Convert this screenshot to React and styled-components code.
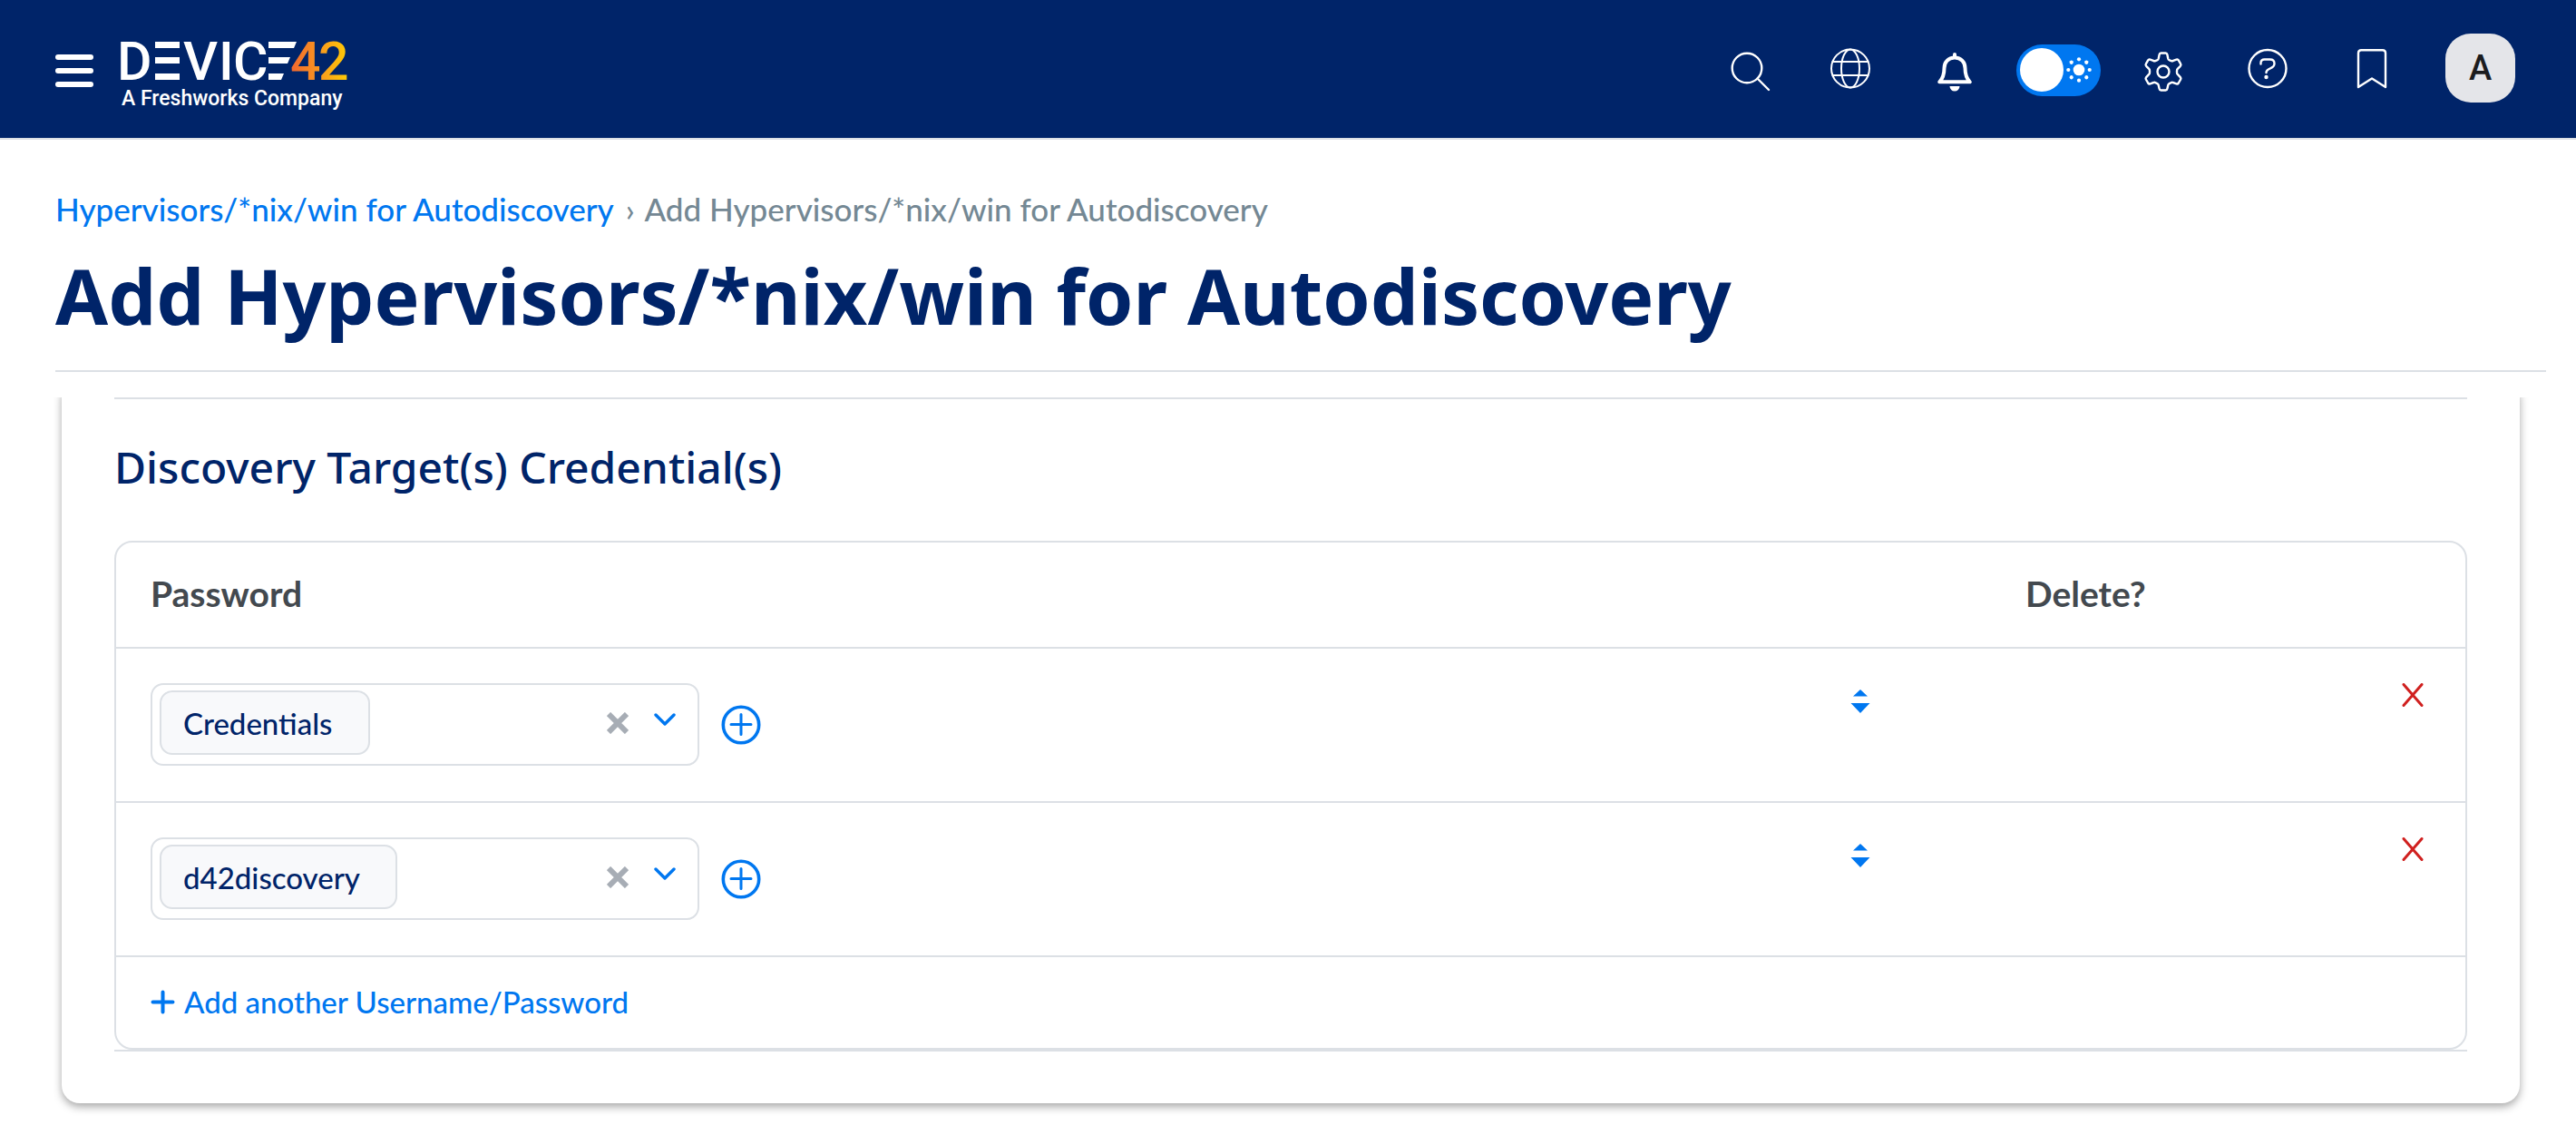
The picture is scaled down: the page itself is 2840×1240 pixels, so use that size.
import React from "react";
import styled, { createGlobalStyle } from "styled-components";

const color = {
  navy: "#002469",
  blue: "#0077f0",
  line: "#dce0e5",
  grey: "#748894",
  heading: "#43494f",
  red: "#d0201f",
};

const GlobalStyle = createGlobalStyle`
  *, *::before, *::after { box-sizing: border-box; }
  body {
    margin: 0;
    background: #fff;
    color: ${color.navy};
    font-family: Lato, "Liberation Sans", sans-serif;
    font-weight: 500;
  }
  button {
    margin: 0;
    padding: 0;
    border: 0;
    background: none;
    color: inherit;
    font: inherit;
    cursor: pointer;
  }
  svg { display: block; flex: none; }
`;

/* ---------- top bar ---------- */

const TopBar = styled.header`
  display: flex;
  align-items: center;
  height: 154px;
  padding: 0 67px 2px 61px;
  background: ${color.navy};
  border-bottom: 2px solid ${color.line};
`;

const MenuButton = styled.button`
  display: grid;
  gap: 9px;
  width: 42px;
  margin-right: 24px;
  padding-top: 6px;
`;

const MenuLine = styled.span`
  height: 6px;
  border-radius: 3px;
  background: #fff;
`;

const LogoLink = styled.a`
  display: block;
  font-family: Roboto, sans-serif;
  font-weight: 500;
`;

const Actions = styled.nav`
  display: flex;
  align-items: center;
  margin-left: auto;
`;

const IconButton = styled.button`
  display: flex;
  justify-content: center;
  width: ${(p) => (p.$narrow ? 105 : 115)}px;
  color: #fff;
`;

const ThemeSwitch = styled.label`
  position: relative;
  display: flex;
  align-items: center;
  justify-content: space-between;
  width: 93px;
  height: 57px;
  margin: 4px 11px 0;
  padding: 0 10px 0 4px;
  border-radius: 29px;
  background: ${color.blue};
  color: #fff;
  cursor: pointer;
`;

const SwitchInput = styled.input`
  position: absolute;
  inset: 0;
  margin: 0;
  opacity: 0;
`;

const Knob = styled.span`
  width: 48px;
  height: 48px;
  border-radius: 50%;
  background: #fff;
`;

const Avatar = styled.button`
  width: 77px;
  height: 76px;
  margin-left: 24px;
  border-radius: 28px;
  background: #e4e5e9;
  color: #1b1c1e;
  font-family: Roboto, sans-serif;
  font-size: 38px;
  font-weight: 500;
`;

/* ---------- page heading ---------- */

const PageHead = styled.div`
  margin: 0 33px 28px 61px;
  padding: 54px 0 32px;
  border-bottom: 2px solid ${color.line};
`;

const Breadcrumb = styled.nav`
  font-size: 35px;
  line-height: 44px;
  color: ${color.grey};
`;

const Crumb = styled.a`
  color: ${color.blue};
  text-decoration: none;
`;

const Separator = styled.span`
  margin: 0 3px 0 5px;
`;

const Title = styled.h1`
  margin: 24px 0 0;
  font-family: "Noto Sans", "Open Sans", sans-serif;
  font-size: 84px;
  font-weight: 700;
  line-height: 100px;
`;

/* ---------- form card ---------- */

const ScrollArea = styled.main`
  overflow: hidden;
  padding: 0 62px 24px 68px;
`;

const Card = styled.div`
  margin-top: -20px;
  padding: 20px 58px 57px;
  border-radius: 20px;
  background: #fff;
  box-shadow: 0 4px 10px rgba(0, 0, 0, 0.34);
`;

const Section = styled.section`
  border: solid ${color.line};
  border-width: 2px 0;
`;

const SectionTitle = styled.h2`
  margin: 0;
  padding: 43px 0 49px;
  font-family: "Noto Sans", "Open Sans", sans-serif;
  font-size: 48px;
  font-weight: 500;
  line-height: 64px;
`;

const Table = styled.table`
  width: 100%;
  table-layout: fixed;
  border: 2px solid ${color.line};
  border-radius: 20px;
  border-spacing: 0;
`;

const HeadCell = styled.th`
  width: ${(p) => p.$width || "auto"};
  padding: 32px 38px 35px;
  border-bottom: 2px solid ${color.line};
  color: ${color.heading};
  font-size: 39px;
  font-weight: 700;
  line-height: 48px;
  text-align: left;
`;

const Cell = styled.td`
  padding: 38px ${(p) => p.$inset || 38}px 39px;
  border-bottom: 2px solid ${color.line};
  vertical-align: top;
`;

const FootCell = styled.td`
  padding: 29px 38px 31px;
`;

const Field = styled.div`
  display: flex;
  align-items: center;
  gap: 24px;
`;

const SelectBox = styled.div`
  display: flex;
  align-items: center;
  gap: 28px;
  width: 605px;
  height: 91px;
  padding: 0 24px 4px 8px;
  border: 2px solid ${color.line};
  border-radius: 14px;
`;

const ValueSelect = styled.select`
  appearance: none;
  height: 71px;
  margin-right: auto;
  padding: 0 39px 0 24px;
  border: 2px solid ${color.line};
  border-radius: 14px;
  background: #f8f9fb;
  color: ${color.navy};
  font: inherit;
  font-size: 33px;
`;

const ToolButton = styled.button`
  display: block;
  color: ${(p) => p.$color || color.blue};
  ${(p) => p.$end && "margin-left: auto;"}
`;

const AddLink = styled.a`
  display: inline-flex;
  align-items: center;
  gap: 10px;
  color: ${color.blue};
  font-size: 33px;
  line-height: 40px;
  text-decoration: none;
`;

/* ---------- drawings ---------- */

const Logo = () => (
  <svg width="257" height="94" viewBox="-6 0 257 94" role="img" aria-label="Device42, a Freshworks company">
    <defs>
      <linearGradient id="flame" gradientUnits="userSpaceOnUse" x1="190" y1="0" x2="250" y2="0">
        <stop offset="0" stopColor="#f26a2e" />
        <stop offset="0.45" stopColor="#f89420" />
        <stop offset="1" stopColor="#ffcb05" />
      </linearGradient>
    </defs>
    <g fill="#fff" fontSize="59">
      <text x="-4" y="60">D</text>
      <text x="69" y="60">V</text>
      <text x="108" y="60">I</text>
      <text x="124" y="60">C</text>
    </g>
    <g fill="#fff">
      <rect x="38" y="18" width="27" height="7" />
      <rect x="38" y="35" width="27" height="7" />
      <rect x="38" y="53" width="27" height="7" />
      <polygon points="163,18 194,18 191,25 163,25" />
      <polygon points="163,35 187,35 184,42 163,42" />
      <polygon points="163,53 180,53 177,60 163,60" />
    </g>
    <text x="187" y="60" fontSize="59" fill="url(#flame)">4</text>
    <text x="218" y="60" fontSize="59" fill="url(#flame)">2</text>
    <text x="1" y="88" fontSize="23" fill="#fff">A Freshworks Company</text>
  </svg>
);

const Line = ({ size = 52, children, width = 2.4, ...rest }) => (
  <svg width={size} height={size} viewBox={`0 0 ${size} ${size}`} fill="none" stroke="currentColor"
    strokeWidth={width} strokeLinecap="round" strokeLinejoin="round" aria-hidden="true" {...rest}>
    {children}
  </svg>
);

const SearchIcon = () => (
  <Line>
    <circle cx="22" cy="26" r="16.3" />
    <path d="M33.5 37.5 46 50" />
  </Line>
);

const GlobeIcon = () => (
  <Line width={2}>
    <circle cx="26" cy="26.5" r="21" />
    <ellipse cx="26" cy="26.5" rx="10" ry="21" />
    <path d="M6.5 19h39M6.5 34h39" />
  </Line>
);

const BellIcon = () => (
  <Line width={4}>
    <path d="M26 11v2M26 14.5c7 0 11.5 5 11.5 11.5 0 8 1.500 11.500 5.300 15.300H9.200c3.800-3.800 5.300-7.300 5.300-15.300C14.500 19.500 19 14.500 26 14.500z" />
    <path d="M20.500 46h11a5.500 5.500 0 0 1-11 0z" fill="currentColor" stroke="none" />
  </Line>
);

const GearIcon = () => (
  <Line>
    <path d="M23.500 9.500h5c1 0 1.700.7 1.900 1.700l.9 4.500c.2.8.8 1.400 1.500 1.600l2 .8c.7.300 1.500.200 2.200-.2l3.500-1.300c.9-.3 1.800 0 2.300.8l2.300 4c.5.800.3 1.700-.3 2.400l-3 3.100c-.6.600-.8 1.300-.8 2v2c0 .8.200 1.500.8 2l3 3.200c.6.700.8 1.600.3 2.400l-2.300 4c-.5.800-1.400 1.100-2.300.8l-3.800-1.300c-.7-.3-1.400-.2-2 .2l-2 .9c-.7.300-1.200.9-1.400 1.700l-.9 4c-.2 1-.9 1.700-1.900 1.700h-5c-1 0-1.700-.7-1.900-1.700l-.9-4c-.2-.8-.7-1.400-1.400-1.700l-2-.9c-.6-.4-1.300-.5-2-.2l-3.800 1.300c-.9.300-1.800 0-2.300-.8l-2.300-4c-.5-.8-.3-1.700.3-2.400l3-3.200c.6-.5.8-1.200.8-2v-2c0-.7-.2-1.400-.8-2l-3-3.100c-.6-.7-.8-1.600-.3-2.400l2.300-4c.5-.8 1.400-1.100 2.300-.8l3.500 1.300c.7.400 1.500.5 2.200.2l2-.8c.7-.2 1.300-.8 1.500-1.600l.9-4.500c.2-1 .9-1.700 1.900-1.700z" />
    <circle cx="26" cy="30" r="6.500" />
  </Line>
);

const HelpIcon = () => (
  <Line>
    <circle cx="26" cy="26.500" r="20.500" />
    <path d="M18.500 21.500v-1.300c0-2.500 1.500-3.700 4-3.700h6c3 0 5 1.800 5 4.500 0 3-2 4.300-4.500 5.300-3 1.200-4.500 2.400-4.500 4.700" />
    <circle cx="24.500" cy="36" r="2.200" fill="currentColor" stroke="none" />
  </Line>
);

const BookmarkIcon = () => (
  <Line>
    <path d="M11 47V9.500c0-2 1.500-3.300 3.300-3.300h23.400c1.800 0 3.300 1.300 3.300 3.300V47L26 37.500z" />
  </Line>
);

const SunIcon = () => (
  <svg width="28" height="28" viewBox="-14 -14 28 28" fill="currentColor" aria-hidden="true">
    <circle r="6.300" />
    {[0, 45, 90, 135, 180, 225, 270, 315].map((a) => (
      <circle key={a} cx="11.700" r="2.100" transform={`rotate(${a})`} />
    ))}
  </svg>
);

const ClearIcon = () => (
  <Line size={24} width={6} strokeLinecap="butt">
    <path d="M2 2l20 20M22 2 2 22" />
  </Line>
);

const ChevronIcon = () => (
  <Line size={24} width={3.4}>
    <path d="M2 3l10 10 10-10" />
  </Line>
);

const CirclePlusIcon = () => (
  <Line size={44} width={3.600}>
    <circle cx="22" cy="22" r="19.700" />
    <path d="M22 10.500v22M11 21.500h22" strokeWidth="3" />
  </Line>
);

const PlusIcon = () => (
  <Line size={27} width={4}>
    <path d="M13.500 2.500v22M2.500 13.500h22" />
  </Line>
);

const SortIcon = () => (
  <svg width="22" height="34" viewBox="0 0 22 34" fill="currentColor" aria-hidden="true">
    <path d="M11 7l8 7.500H3zM0.500 22h21L11 33z" />
  </svg>
);

const DeleteIcon = () => (
  <Line size={26} width={3}>
    <path d="M3 1.500l20 23M23 1.500l-20 23" />
  </Line>
);

/* ---------- page ---------- */

const CredentialRow = ({ value }) => (
  <tr>
    <Cell>
      <Field>
        <SelectBox>
          <ValueSelect aria-labelledby="col-password" defaultValue={value}>
            <option>{value}</option>
          </ValueSelect>
          <ToolButton type="button" aria-label="Clear" $color="#a7adb5"><ClearIcon /></ToolButton>
          <ToolButton type="button" aria-label="Open list"><ChevronIcon /></ToolButton>
        </SelectBox>
        <ToolButton type="button" aria-label="Add password"><CirclePlusIcon /></ToolButton>
      </Field>
    </Cell>
    <Cell $inset={28}>
      <ToolButton type="button" aria-label="Reorder"><SortIcon /></ToolButton>
    </Cell>
    <Cell $inset={45}>
      <ToolButton type="button" aria-label="Delete" $color={color.red} $end><DeleteIcon /></ToolButton>
    </Cell>
  </tr>
);

export default function App() {
  return (
    <>
      <GlobalStyle />
      <TopBar>
        <MenuButton type="button" aria-label="Menu">
          <MenuLine />
          <MenuLine />
          <MenuLine />
        </MenuButton>
        <LogoLink href="#"><Logo /></LogoLink>
        <Actions aria-label="Tools">
          <IconButton type="button" aria-label="Search" $narrow><SearchIcon /></IconButton>
          <IconButton type="button" aria-label="Language"><GlobeIcon /></IconButton>
          <IconButton type="button" aria-label="Notifications"><BellIcon /></IconButton>
          <ThemeSwitch>
            <SwitchInput type="checkbox" role="switch" aria-label="Dark theme" />
            <Knob />
            <SunIcon />
          </ThemeSwitch>
          <IconButton type="button" aria-label="Settings"><GearIcon /></IconButton>
          <IconButton type="button" aria-label="Help"><HelpIcon /></IconButton>
          <IconButton type="button" aria-label="Bookmarks"><BookmarkIcon /></IconButton>
          <Avatar type="button">A</Avatar>
        </Actions>
      </TopBar>

      <PageHead>
        <Breadcrumb aria-label="Breadcrumb">
          <Crumb href="#">Hypervisors/*nix/win for Autodiscovery</Crumb>
          {" "}<Separator>›</Separator>{" "}
          Add Hypervisors/*nix/win for Autodiscovery
        </Breadcrumb>
        <Title>Add Hypervisors/*nix/win for Autodiscovery</Title>
      </PageHead>

      <ScrollArea>
        <Card>
          <Section>
            <SectionTitle>Discovery Target(s) Credential(s)</SectionTitle>
            <Table>
              <thead>
                <tr>
                  <HeadCell id="col-password" scope="col">Password</HeadCell>
                  <HeadCell as="td" $width="183px" />
                  <HeadCell scope="col" $width="523px">Delete?</HeadCell>
                </tr>
              </thead>
              <tbody>
                <CredentialRow value="Credentials" />
                <CredentialRow value="d42discovery" />
                <tr>
                  <FootCell colSpan={3}>
                    <AddLink href="#"><PlusIcon />Add another Username/Password</AddLink>
                  </FootCell>
                </tr>
              </tbody>
            </Table>
          </Section>
        </Card>
      </ScrollArea>
    </>
  );
}
